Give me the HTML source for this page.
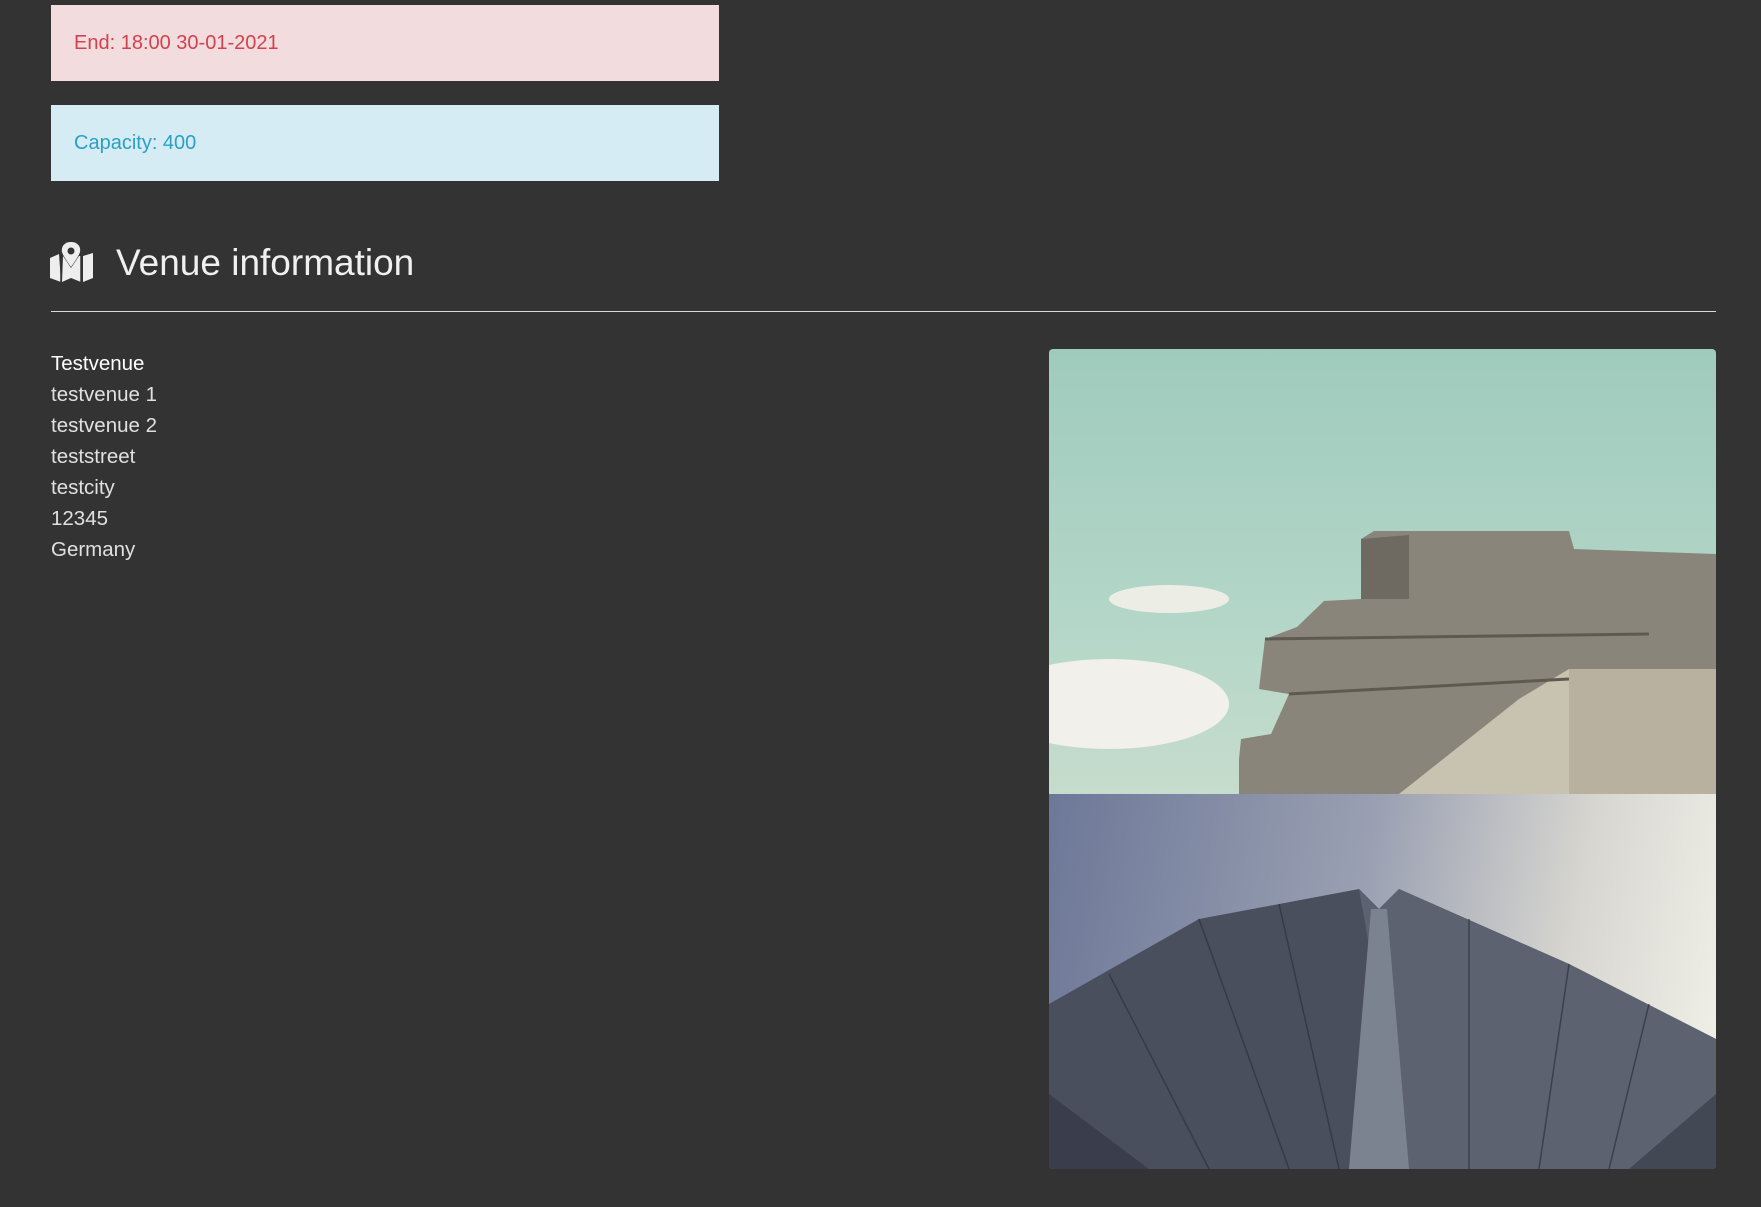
<!DOCTYPE html>
<html><head><meta charset="utf-8"><style>
html,body{margin:0;padding:0;background:#333333;width:1761px;height:1207px;overflow:hidden;font-family:"Liberation Sans",sans-serif;}
.box{position:absolute;left:51px;width:668px;height:76px;font-size:20px;line-height:76px;padding-left:23px;box-sizing:border-box;}
.end{top:5px;background:#f2dcdd;color:#d1424f;}
.cap{top:105px;background:#d6ecf5;color:#2aa0c4;}
.h{position:absolute;left:116px;top:238px;font-size:37px;color:#f0f0f0;line-height:50px;}
.hr{position:absolute;left:51px;top:311px;width:1665px;height:1px;background:#d8d8e0;}
.addr{position:absolute;left:51px;top:348px;font-size:20.5px;line-height:31px;color:#e0e0e0;}
.addr div:first-child{color:#fff;}
.img{position:absolute;left:1049px;width:667px;overflow:hidden;}
</style></head><body>
<div class="box end">End: 18:00 30-01-2021</div>
<div class="box cap">Capacity: 400</div>
<svg style="position:absolute;left:50px;top:242px" width="44" height="40" viewBox="0 0 44 40">
<path fill="#eee" d="M0 16 L9 12 L11 40 L0 36Z M13 14 L21 26 L29 14 L31 14 L31 40 L21 36 L12 40Z M33 14 L43 11 L43 36 L33 40Z"/>
<path fill="#eee" d="M21 0 C14 0 11 5 12 10 C13 14 21 25 21 25 C21 25 29 14 30 10 C31 5 28 0 21 0Z"/>
<circle cx="21" cy="9" r="3.5" fill="#333"/>
<path stroke="#333" stroke-width="1.5" fill="none" d="M11 14 L11 40 M31 14 L31 40"/>
</svg>
<div class="h">Venue information</div>
<div class="hr"></div>
<div class="addr"><div>Testvenue</div><div>testvenue 1</div><div>testvenue 2</div><div>teststreet</div><div>testcity</div><div>12345</div><div>Germany</div></div>
<div class="img" style="top:349px;height:445px;border-radius:4px 4px 0 0;background:linear-gradient(180deg,#9fcbbd,#b3d6c8 60%,#c6dccd);">
<svg width="667" height="445" viewBox="0 0 667 445">
<ellipse cx="60" cy="355" rx="120" ry="45" fill="#f1f0ea"/>
<ellipse cx="120" cy="250" rx="60" ry="14" fill="#eceee6"/>
<path fill="#8a857a" d="M312 190 L325 182 L520 182 L525 200 L667 205 L667 445 L190 445 L190 410 L192 390 L222 385 L240 345 L210 340 L216 290 L248 278 L275 252 L312 250Z"/>
<path fill="#c8c2b0" d="M350 445 L470 350 L520 320 L520 445Z"/>
<path fill="#6e6a62" d="M312 190 L360 186 L360 250 L312 250Z"/>
<path fill="#b8b1a0" d="M520 320 L667 320 L667 445 L520 445Z"/>
<path stroke="#5e5a52" stroke-width="3" fill="none" d="M216 290 L600 285 M240 345 L520 330"/>
</svg></div>
<div class="img" style="top:794px;height:375px;border-radius:0 0 4px 4px;background:linear-gradient(100deg,#6d7898,#9aa0b2 45%,#d7d6d0 75%,#f2f1ea);">
<svg width="667" height="375" viewBox="0 0 667 375">
<path fill="#4a4f5e" d="M0 210 L150 125 L310 95 L330 115 L350 95 L520 170 L667 245 L667 375 L0 375Z"/>
<path fill="#5c6270" d="M310 95 L330 115 L350 95 L520 170 L667 245 L667 375 L360 375Z"/>
<path fill="#7b8290" d="M322 115 L338 115 L360 375 L300 375Z"/>
<path fill="#2a2d3a" opacity=".5" d="M0 300 L100 375 L0 375Z M667 300 L580 375 L667 375Z"/>
<path stroke="#2e3140" stroke-width="1.5" fill="none" opacity=".7" d="M60 180 L160 375 M150 125 L240 375 M230 110 L290 375 M420 125 L420 375 M520 170 L490 375 M600 210 L560 375"/>
</svg></div>
</body></html>
